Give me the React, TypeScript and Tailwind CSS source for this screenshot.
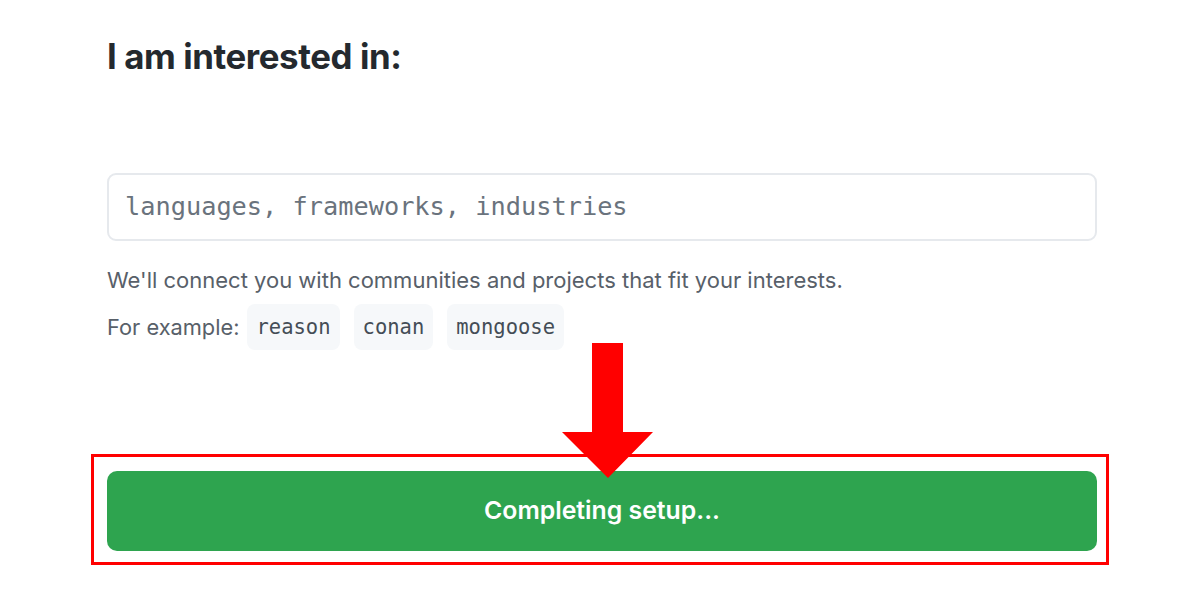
import React from "react";

export default function App() {
  return (
    <div className="w-[1200px] h-[600px] bg-white relative overflow-hidden" style={{ fontFamily: "Inter, 'Liberation Sans', sans-serif" }}>
      <div className="pl-[107px] pr-[103px] flex flex-col">
        <h1 className="mt-[36px] text-[34.8px] leading-[40px] font-bold text-[#24292e] tracking-[-0.4px]">I am interested in:</h1>
        <div className="mt-[97px] h-[68px] rounded-[9px] border-2 border-[#e6e9ed] flex items-center pl-[16px]">
          <span className="text-[25.3px] text-[#6a737d]" style={{ fontFamily: "'DejaVu Sans Mono', 'Liberation Mono', monospace" }}>languages, frameworks, industries</span>
        </div>
        <p className="mt-[24px] text-[22px] leading-[30px] text-[#586069]">We'll connect you with communities and projects that fit your interests.</p>
        <div className="mt-[9px] flex items-center gap-[14px]">
          <span className="text-[21.8px] text-[#586069] mr-[-6px]">For example:</span>
          {["reason", "conan", "mongoose"].map((t) => (
            <span key={t} className="h-[46px] px-[9px] rounded-[8px] bg-[#f6f8fa] flex items-center text-[20.5px] text-[#444d56]" style={{ fontFamily: "'DejaVu Sans Mono', 'Liberation Mono', monospace" }}>{t}</span>
          ))}
        </div>
        <div className="mt-[104px] ml-[-16px] mr-[-12px] border-[3px] border-[#ff0000] pt-[14px] pb-[11px] pl-[13px] pr-[9px]">
          <div className="h-[80px] rounded-[10px] bg-[#2ea44f] flex items-center justify-center text-white text-[24.8px] font-semibold">Completing setup...</div>
        </div>
      </div>
      <svg className="absolute left-[560px] top-[343px]" width="96" height="138" viewBox="0 0 96 138">
        <polygon points="32,0 63,0 63,89 93,89 48,135 2,89 32,89" fill="#ff0000" />
      </svg>
    </div>
  );
}
